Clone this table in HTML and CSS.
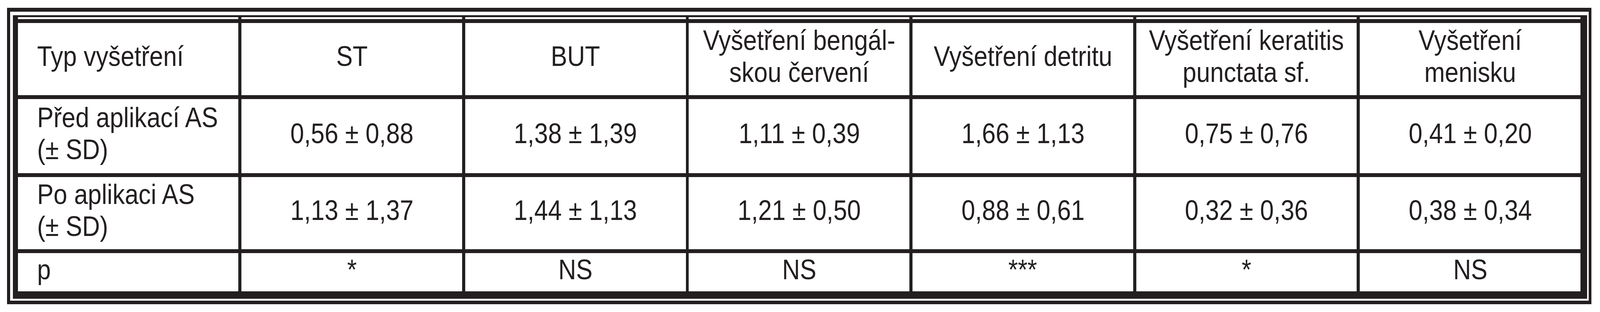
FILE: index.html
```html
<!DOCTYPE html>
<html lang="cs">
<head>
<meta charset="utf-8">
<title>Tabulka vyšetření</title>
<link rel="stylesheet" href="styles.css">
</head>
<body>
<div class="page">
  <div class="frame">
    <div class="grid">
      <div class="gap-cell"></div><div class="gap-cell"></div><div class="gap-cell"></div><div class="gap-cell"></div><div class="gap-cell"></div><div class="gap-cell"></div><div class="gap-cell"></div>

      <div class="cell label"><span class="t">Typ vyšetření</span></div>
      <div class="cell"><span class="t">ST</span></div>
      <div class="cell"><span class="t">BUT</span></div>
      <div class="cell"><span class="t">Vyšetření bengál-<br>skou červení</span></div>
      <div class="cell"><span class="t">Vyšetření detritu</span></div>
      <div class="cell"><span class="t">Vyšetření keratitis<br>punctata sf.</span></div>
      <div class="cell"><span class="t">Vyšetření<br>menisku</span></div>

      <div class="cell label"><span class="t">Před aplikací AS<br>(± SD)</span></div>
      <div class="cell"><span class="t">0,56 ± 0,88</span></div>
      <div class="cell"><span class="t">1,38 ± 1,39</span></div>
      <div class="cell"><span class="t">1,11 ± 0,39</span></div>
      <div class="cell"><span class="t">1,66 ± 1,13</span></div>
      <div class="cell"><span class="t">0,75 ± 0,76</span></div>
      <div class="cell"><span class="t">0,41 ± 0,20</span></div>

      <div class="cell label"><span class="t">Po aplikaci AS<br>(± SD)</span></div>
      <div class="cell"><span class="t">1,13 ± 1,37</span></div>
      <div class="cell"><span class="t">1,44 ± 1,13</span></div>
      <div class="cell"><span class="t">1,21 ± 0,50</span></div>
      <div class="cell"><span class="t">0,88 ± 0,61</span></div>
      <div class="cell"><span class="t">0,32 ± 0,36</span></div>
      <div class="cell"><span class="t">0,38 ± 0,34</span></div>

      <div class="cell label"><span class="t">p</span></div>
      <div class="cell"><span class="t">*</span></div>
      <div class="cell"><span class="t">NS</span></div>
      <div class="cell"><span class="t">NS</span></div>
      <div class="cell"><span class="t">***</span></div>
      <div class="cell"><span class="t">*</span></div>
      <div class="cell"><span class="t">NS</span></div>
    </div>
  </div>
</div>
<script src="app.js"></script>
</body>
</html>
```

FILE: styles.css
```css
/* Horizontal sizes are given in units of the 4673px-wide design (--u),
   so the table always spans the viewport in the same proportions. */
:root {
  --u: calc(100vw / 4673);
}

html, body {
  margin: 0;
  padding: 0;
  background: #ffffff;
  overflow: hidden;
}

body {
  font-family: "Liberation Sans", Arial, Helvetica, sans-serif;
  color: #231f20;
}

.page {
  box-sizing: border-box;
  height: 800px;
  padding: 20px calc(25 * var(--u)) 20px calc(20 * var(--u));
}

.frame {
  box-sizing: border-box;
  height: 760px;
  border-style: solid;
  border-color: #231f20;
  border-width: 10px calc(9 * var(--u)) 9px calc(10 * var(--u));
  padding: 9px calc(5 * var(--u)) 5px calc(9 * var(--u));
  background: #ffffff;
}

.grid {
  box-sizing: border-box;
  height: 727px;
  background: #231f20;
  padding: 5px calc(19 * var(--u)) 19px calc(14 * var(--u));
  display: grid;
  grid-template-columns: repeat(7, minmax(0, 1fr));
  grid-template-rows: 5px 185px 190px 185px 98px;
  column-gap: calc(9 * var(--u));
  row-gap: 10px;
}

.gap-cell {
  background: #ffffff;
}

.cell {
  background: #ffffff;
  box-sizing: border-box;
  display: flex;
  align-items: center;
  justify-content: center;
  text-align: center;
  font-size: 72px;
  line-height: 82px;
  padding: 0 0 15px 0;
  white-space: nowrap;
}

.cell.label {
  justify-content: flex-start;
  text-align: left;
  padding-left: calc(56 * var(--u));
}

.t {
  display: inline-block;
  flex: none;
  transform: scaleX(var(--sx, 1));
  transform-origin: 50% 50%;
}

.label .t {
  transform-origin: 0 50%;
}
```

FILE: app.js
```js
(function () {
  function fit() {
    var w = document.documentElement.clientWidth || window.innerWidth;
    var s = Math.min(1, w / 4673);
    document.documentElement.style.setProperty('--sx', String(s));
  }
  fit();
  window.addEventListener('resize', fit);
})();
```
